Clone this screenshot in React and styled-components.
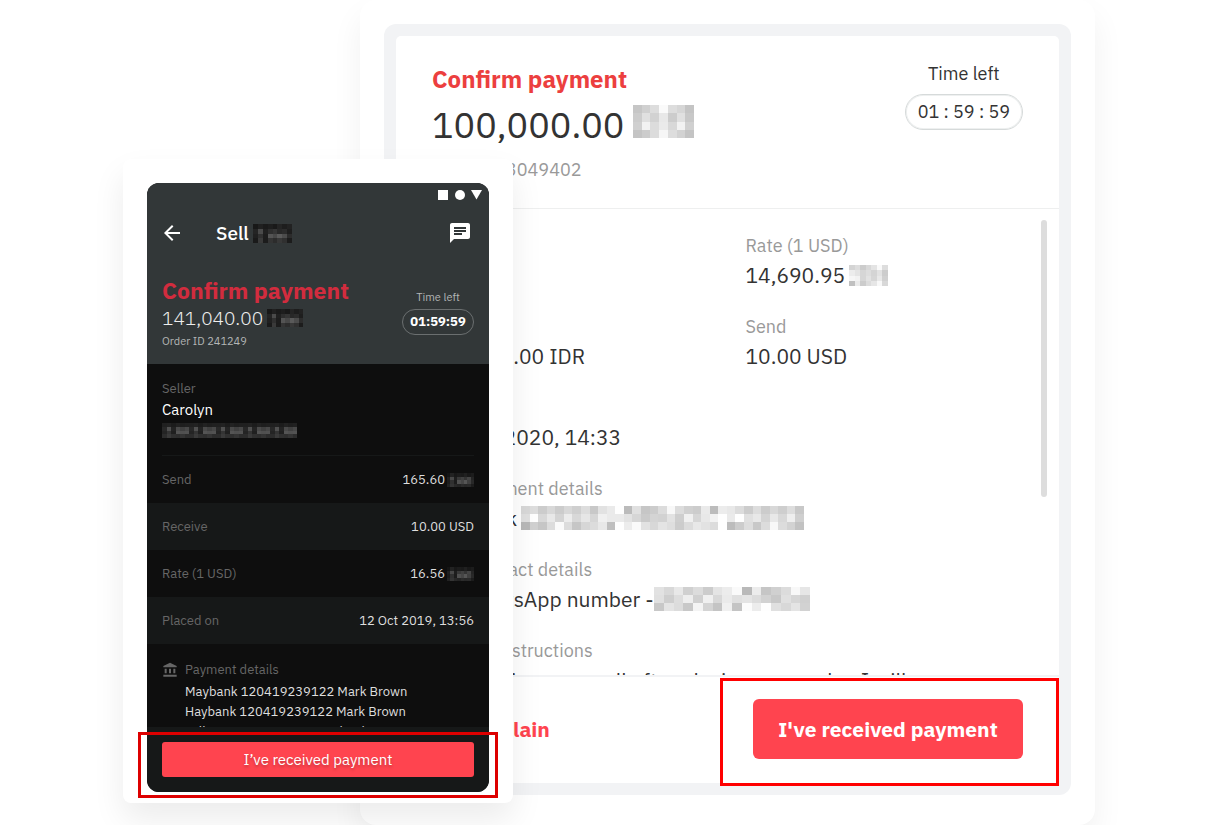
import React from "react";
import styled, { createGlobalStyle } from "styled-components";
import { MdAccountBalance, MdArrowBack, MdChat } from "react-icons/md";

const GlobalStyle = createGlobalStyle`
  *, *::before, *::after { box-sizing: border-box; }
  body { margin: 0; background: #fff; overflow-x: hidden; }
  body, button { font-family: "IBM Plex Sans", Roboto, "Liberation Sans", sans-serif; }
  h1, h2, p, dl, dt, dd { margin: 0; font-weight: 400; }
`;

/* ---------- redacted text ---------- */

const MosaicSvg = styled.svg`
  display: block;
  flex: none;
`;

// Each row is a list of two-digit grey levels, one for each block.
function Mosaic({ width, height, rows }) {
  const cells = rows.map((row) => row.split(" "));
  return (
    <MosaicSvg
      width={width}
      height={height}
      viewBox={`0 0 ${cells[0].length} ${rows.length}`}
      preserveAspectRatio="none"
      shapeRendering="crispEdges"
      aria-hidden="true"
    >
      {cells.map((row, y) =>
        row.map((g, x) => (
          <rect key={`${x}-${y}`} x={x} y={y} width="1" height="1" fill={`#${g}${g}${g}`} />
        ))
      )}
    </MosaicSvg>
  );
}

const LARGE_CODE = [
  "c6 d0 dd fa dd d6 c4",
  "cc e0 d2 e8 cc e0 c8",
  "d0 f2 dc ea d8 f2 d0",
  "c4 cc dc f6 dd d2 c4",
];
const RATE_CODE = [
  "d4 dd cc d8 e4 fa dd",
  "ec e4 d6 dd d4 e2 cc",
  "f6 f2 d6 e2 d6 e8 d0",
  "c0 ea cc dc e6 f8 d8",
];
const ACCOUNT_CODE = [
  "d8 dd cc d8 cc d8 cf dd c8 e2 ea fe bb e0 c6 cc dc f8 dc d0 cc ea bc ec e8 dc cc dd cc d8 ce dd c8",
  "e0 fe d8 e8 d4 ec d8 e6 d6 f0 ea ea e2 d6 ca d4 d2 e2 ce f0 d6 e8 f2 fe ea fe e0 e8 d4 e8 d8 ee cf",
  "b8 d0 c6 dc fa dc c6 d6 dc e8 bf fe ec fa e2 d8 e4 de cc dc e8 e2 dc fe bc cc dd c8 dc f8 dc d2 c2",
];
const PHONE_CODE = [
  "e2 d8 e8 d0 dc cc e4 ec fa b9 ec c6 d0 dc f8 e6",
  "e0 ce dd ee d0 f0 d8 ea e0 e4 dc d2 c8 e0 d6 d0",
  "c8 e4 dc c8 f4 d4 c4 f0 c4 fc ec fe e0 d8 e4 d2",
];
const DARK_CODE = [
  "18 20 1a 1e 19 24 1d 22",
  "24 4a 20 2e 35 28 2c 1e",
  "20 30 1d 54 48 5a 4c 2c",
  "1a 3a 1c 34 2c 38 30 1c",
];
const ROW_CODE = [
  "14 22 18 1c 1a 20 18 1c",
  "20 48 1e 38 40 34 44 24",
  "1c 30 1c 50 46 56 40 28",
  "22 34 28 24 2c 28 2a 1c",
];
const SELLER_ROWS = [
  "20 22 1c 22 1e 20",
  "28 50 24 4a 40 48",
  "24 34 20 54 50 52",
  "2c 3a 30 2e 34 2c",
];
const SELLER_CODE = SELLER_ROWS.map((row) => Array(5).fill(row).join(" "));

/* ---------- page ---------- */

const Stage = styled.main`
  display: grid;
  grid-template-columns: 237px 153px minmax(0, 1fr);
  padding: 0 123px;
`;

const HighlightTarget = styled.div`
  position: relative;
`;

const Highlight = styled.span`
  position: absolute;
  inset: ${(p) => p.$inset};
  border: 3px solid ${(p) => p.$color};
  pointer-events: none;
`;

const Line = styled.div`
  display: flex;
  align-items: center;
  gap: ${(p) => p.$gap || 0}px;
  white-space: nowrap;
`;

/* ---------- desktop dialog ---------- */

const DesktopCard = styled.section`
  grid-area: 1 / 2 / 2 / 4;
  padding: 24px 24px 30px;
  border-radius: 16px;
  background: #fff;
  box-shadow: 0 16px 32px rgba(0, 0, 0, 0.06);
`;

const DialogFrame = styled.div`
  padding: 12px;
  border-radius: 12px;
  background: #f2f3f5;
`;

const Dialog = styled.div`
  border-radius: 5px 5px 0 0;
  background: #fff;
  color: #333;
`;

const DialogHeader = styled.header`
  display: flex;
  justify-content: space-between;
  padding: 28px 36px 24px;
  border-bottom: 1px solid #eeefef;
`;

const DialogHeading = styled.div`
  display: grid;
  gap: 8px;
  white-space: nowrap;
`;

const DialogTitle = styled.h1`
  color: #ec3f3f;
  font-size: 24px;
  line-height: 30px;
  && { font-weight: 700; }
`;

const DialogAmount = styled(Line)`
  font-size: 36px;
  line-height: 46px;

  svg { margin-bottom: 8px; }
`;

const DialogOrder = styled.p`
  color: #999;
  font-size: 18px;
  line-height: 28px;
`;

const Timer = styled.div`
  display: flex;
  flex-direction: column;
  align-items: center;
  gap: 10px;
  font-size: 18px;
  line-height: 20px;
`;

const TimerPill = styled.div`
  padding: 7px 12px;
  border: 1px solid #d6dada;
  border-radius: 18px;
  box-shadow: inset 0 0 0 1px #eef0f0;
`;

const DialogBody = styled.div`
  display: flex;
  height: 468px;
  overflow: hidden;
  border-bottom: 2px solid #f2f3f5;
`;

const Fields = styled.dl`
  display: grid;
  flex: 1;
  grid-template-columns: 1fr 1fr;
  align-content: start;
  gap: 23px 36px;
  padding: 23px 18px 0 36px;
`;

const Field = styled.div`
  grid-column: ${(p) => (p.$wide ? "1 / -1" : "auto")};
`;

const FieldLabel = styled.dt`
  color: #999;
  font-size: 18px;
  line-height: 28px;
`;

const FieldValue = styled.dd`
  display: flex;
  align-items: center;
  gap: ${(p) => p.$gap || 0}px;
  font-size: 21px;
  line-height: 30px;
  white-space: nowrap;
`;

const ScrollThumb = styled.div`
  width: 6px;
  height: 277px;
  margin: 11px 12px 0 0;
  border-radius: 3px;
  background: #ddd;
`;

const DialogFooter = styled.footer`
  display: flex;
  justify-content: space-between;
  padding: 22px 36px 24px;
`;

const DialogButton = styled.button`
  min-width: ${(p) => (p.$primary ? 270 : 0)}px;
  height: 60px;
  padding: 0 24px;
  border: 0;
  border-radius: 6px;
  background: ${(p) => (p.$primary ? "#ff444f" : "transparent")};
  color: ${(p) => (p.$primary ? "#fff" : "#ff444f")};
  font-size: 21px;
  font-weight: 700;
`;

/* ---------- phone ---------- */

const PhoneCard = styled.section`
  grid-area: 1 / 1 / 2 / 3;
  z-index: 1;
  align-self: end;
  margin-bottom: 22px;
  padding: 24px 24px 11px;
  border-radius: 8px;
  background: #fff;
  box-shadow: 0 16px 32px rgba(0, 0, 0, 0.08);
`;

const Screen = styled.div`
  border-radius: 12px;
  background: #0e0e0e;
  color: #dedede;
  font-size: 13px;
`;

const ScreenHeader = styled.header`
  border-radius: 12px 12px 0 0;
  background: #323738;
`;

const StatusIcons = styled.div`
  display: flex;
  justify-content: flex-end;
  padding: 7px 7px 6px;
`;

const AppBar = styled.div`
  display: grid;
  grid-template-columns: 56px 1fr auto;
  align-items: center;
  height: 54px;
  padding: 0 17px 0 13px;
  color: #fff;
`;

const IconButton = styled.button`
  display: flex;
  width: 24px;
  padding: 0;
  border: 0;
  background: none;
  color: inherit;
  font-size: 24px;
`;

const AppTitle = styled(Line)`
  font-size: 19px;
  font-weight: 500;
`;

const Summary = styled.div`
  display: flex;
  justify-content: space-between;
  padding: 16px 15px 14px;
`;

const SummaryTitle = styled.h2`
  color: #d22c3e;
  font-size: 23px;
  line-height: 28px;
  && { font-weight: 700; }
`;

const SummaryAmount = styled(Line)`
  color: #eee;
  font-size: 19px;
  font-weight: 300;
  line-height: 28px;
`;

const SummaryOrder = styled.p`
  color: #b4b6b6;
  font-size: 11px;
  line-height: 18px;
`;

const SmallTimer = styled.div`
  display: flex;
  flex-direction: column;
  align-items: center;
  gap: 4px;
  padding-top: 13px;
  color: #b4b6b6;
  font-size: 11px;
  line-height: 16px;
`;

const SmallPill = styled.div`
  min-width: 72px;
  padding: 4px 6px;
  border: 1px solid #6b6f70;
  border-radius: 13px;
  color: #fff;
  font-size: 13px;
  font-weight: 700;
  text-align: center;
`;

const Muted = styled.p`
  color: #666;
  font-size: 13px;
  line-height: 20px;
`;

const Seller = styled.div`
  height: 92px;
  margin: 0 15px;
  padding-top: 15px;
  border-bottom: 1px solid #161818;
`;

const SellerName = styled.p`
  margin-bottom: 2px;
  color: #fff;
  font-size: 15px;
  line-height: 22px;
`;

const Row = styled.div`
  display: flex;
  align-items: center;
  justify-content: space-between;
  height: 47px;
  padding: 0 15px;
  background: ${(p) => (p.$shaded ? "#161818" : "transparent")};
`;

const Details = styled.div`
  display: flex;
  gap: 7px;
  height: 83px;
  overflow: hidden;
  padding: 16px 15px 0;
  line-height: 20px;
`;

const BankIcon = styled(MdAccountBalance)`
  flex: none;
  width: 16px;
  height: 16px;
  margin-top: 2px;
  color: #666;
`;

const DetailText = styled.div`
  display: grid;
  align-content: start;
  gap: 2px;
`;

const ScreenFooter = styled.footer`
  padding: 15px;
  border-radius: 0 0 12px 12px;
  background: #161818;
`;

const ScreenButton = styled.button`
  display: block;
  width: 100%;
  height: 35px;
  border: 0;
  border-radius: 3px;
  background: #ff444f;
  color: #fff;
  font-size: 15px;
  text-shadow: 0 2px 3px rgba(0, 0, 0, 0.25);
`;

function Desktop() {
  return (
    <DesktopCard>
      <DialogFrame>
        <Dialog>
          <DialogHeader>
            <DialogHeading>
              <DialogTitle>Confirm payment</DialogTitle>
              <DialogAmount $gap={9}>
                100,000.00
                <Mosaic width={61} height={33} rows={LARGE_CODE} />
              </DialogAmount>
              <DialogOrder>Order ID 3049402</DialogOrder>
            </DialogHeading>
            <Timer>
              Time left
              <TimerPill>01 : 59 : 59</TimerPill>
            </Timer>
          </DialogHeader>
          <DialogBody>
            <Fields>
              <Field>
                <FieldLabel>Buyer</FieldLabel>
                <FieldValue>Carolyn</FieldValue>
              </Field>
              <Field>
                <FieldLabel>Rate (1 USD)</FieldLabel>
                <FieldValue $gap={4}>
                  14,690.95
                  <Mosaic width={39} height={21} rows={RATE_CODE} />
                </FieldValue>
              </Field>
              <Field>
                <FieldLabel>Receive</FieldLabel>
                <FieldValue>146,909.00 IDR</FieldValue>
              </Field>
              <Field>
                <FieldLabel>Send</FieldLabel>
                <FieldValue>10.00 USD</FieldValue>
              </Field>
              <Field $wide>
                <FieldLabel>Placed on</FieldLabel>
                <FieldValue>12 Aug 2020, 14:33</FieldValue>
              </Field>
              <Field $wide>
                <FieldLabel>Your payment details</FieldLabel>
                <FieldValue $gap={4}>
                  Maybank
                  <Mosaic width={283} height={24} rows={ACCOUNT_CODE} />
                </FieldValue>
              </Field>
              <Field $wide>
                <FieldLabel>Your contact details</FieldLabel>
                <FieldValue>
                  My WhatsApp number -
                  <Mosaic width={156} height={24} rows={PHONE_CODE} />
                </FieldValue>
              </Field>
              <Field $wide>
                <FieldLabel>Buyer's instructions</FieldLabel>
                <FieldValue>Please give me a call after placing your order. I will</FieldValue>
              </Field>
            </Fields>
            <ScrollThumb />
          </DialogBody>
          <DialogFooter>
            <DialogButton type="button">Complain</DialogButton>
            <HighlightTarget>
              <DialogButton type="button" $primary>
                I've received payment
              </DialogButton>
              <Highlight $inset="-21px -36px -27px -33px" $color="#ff0000" />
            </HighlightTarget>
          </DialogFooter>
        </Dialog>
      </DialogFrame>
    </DesktopCard>
  );
}

function Phone() {
  return (
    <PhoneCard>
      <Screen>
        <ScreenHeader>
          <StatusIcons>
            <svg width="44" height="10" viewBox="0 0 44 10" fill="#fff" aria-hidden="true">
              <rect width="10" height="10" />
              <circle cx="22" cy="5" r="5" />
              <path d="M33 0h11l-5.500 9.500z" />
            </svg>
          </StatusIcons>
          <AppBar>
            <IconButton type="button" aria-label="Back">
              <MdArrowBack />
            </IconButton>
            <AppTitle $gap={4}>
              Sell
              <Mosaic width={39} height={19} rows={DARK_CODE} />
            </AppTitle>
            <IconButton type="button" aria-label="Chat">
              <MdChat />
            </IconButton>
          </AppBar>
          <Summary>
            <div>
              <SummaryTitle>Confirm payment</SummaryTitle>
              <SummaryAmount $gap={4}>
                141,040.00
                <Mosaic width={36} height={18} rows={DARK_CODE} />
              </SummaryAmount>
              <SummaryOrder>Order ID 241249</SummaryOrder>
            </div>
            <SmallTimer>
              Time left
              <SmallPill>01:59:59</SmallPill>
            </SmallTimer>
          </Summary>
        </ScreenHeader>
        <Seller>
          <Muted>Seller</Muted>
          <SellerName>Carolyn</SellerName>
          <Mosaic width={135} height={15} rows={SELLER_CODE} />
        </Seller>
        <Row>
          <Muted>Send</Muted>
          <Line $gap={2}>
            165.60
            <Mosaic width={27} height={14} rows={ROW_CODE} />
          </Line>
        </Row>
        <Row $shaded>
          <Muted>Receive</Muted>
          <Line>10.00 USD</Line>
        </Row>
        <Row>
          <Muted>Rate (1 USD)</Muted>
          <Line $gap={2}>
            16.56
            <Mosaic width={27} height={14} rows={ROW_CODE} />
          </Line>
        </Row>
        <Row $shaded>
          <Muted>Placed on</Muted>
          <Line>12 Oct 2019, 13:56</Line>
        </Row>
        <Details>
          <BankIcon />
          <DetailText>
            <Muted>Payment details</Muted>
            <p>
              Maybank 120419239122 Mark Brown
              <br />
              Haybank 120419239122 Mark Brown
              <br />
              collect as soon as my own bank
            </p>
          </DetailText>
        </Details>
        <ScreenFooter>
          <HighlightTarget>
            <ScreenButton type="button">I’ve received payment</ScreenButton>
            <Highlight $inset="-10px -24px -21px -24px" $color="#dd0000" />
          </HighlightTarget>
        </ScreenFooter>
      </Screen>
    </PhoneCard>
  );
}

export default function App() {
  return (
    <>
      <GlobalStyle />
      <Stage>
        <Desktop />
        <Phone />
      </Stage>
    </>
  );
}
